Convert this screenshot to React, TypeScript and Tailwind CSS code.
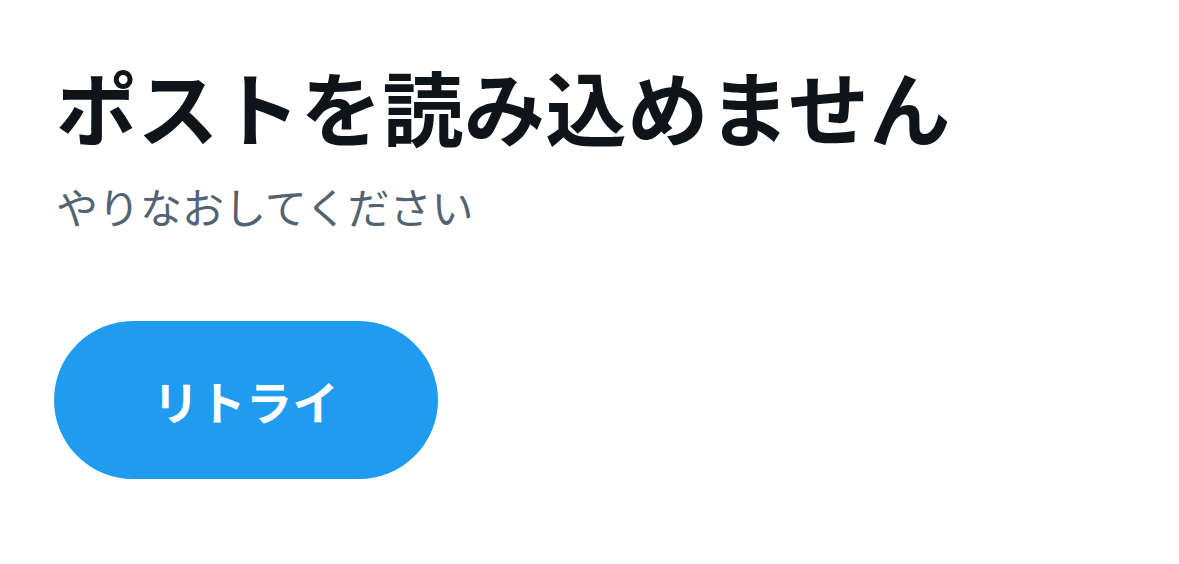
export default function App() {
  return (
    <div
      className="w-[1179px] h-[564px] bg-white pl-[56px] pt-[62px]"
      style={{ fontFamily: '"Noto Sans CJK JP", "Noto Sans", sans-serif' }}
    >
      <h1 className="text-[81px] leading-[86px] font-bold text-[#0f1419] tracking-[0.6px]">
        ポストを読み込めません
      </h1>
      <p className="mt-[33px] text-[42px] leading-[50px] text-[#536471]">
        やりなおしてください
      </p>
      <button className="mt-[90px] -ml-[2px] w-[384px] h-[158px] rounded-full bg-[#1f9bf0] text-white text-[46px] font-bold tracking-[0.5px] flex items-center justify-center">
        リトライ
      </button>
    </div>
  );
}
